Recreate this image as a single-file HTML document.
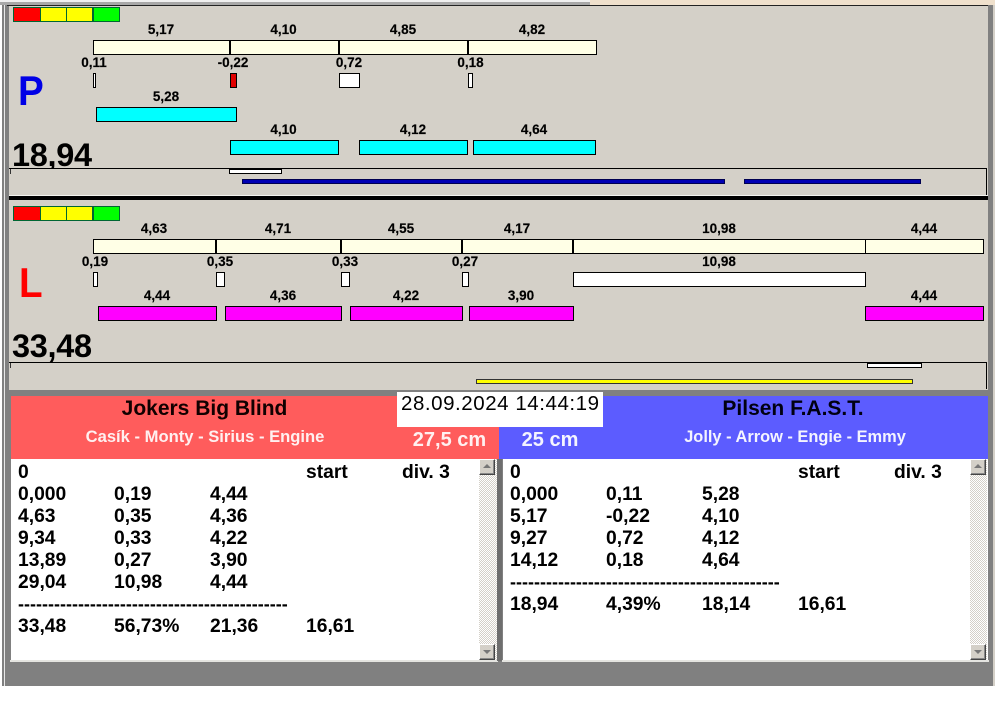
<!DOCTYPE html>
<html><head><meta charset="utf-8"><style>
html,body{margin:0;padding:0;background:#fff}
#r{position:relative;width:995px;height:716px;overflow:hidden;background:#fff;font-family:"Liberation Sans",Arial,sans-serif}
#r div{position:absolute;box-sizing:border-box}
.b{border:1px solid #000}
.c{background:#ffffe6}.w{background:#fff}.cy{background:#0ff}.m{background:#f0f}
.t{font-weight:bold;font-size:13.5px;line-height:14px;height:14px;color:#000;white-space:nowrap;transform:translateX(-50%);-webkit-text-stroke:.15px #000}
.h{font-weight:bold;white-space:nowrap;transform:translateX(-50%)}
.d{font-weight:bold;font-size:19.3px;line-height:22px;height:22px;margin-top:1px;color:#000;white-space:nowrap}
.ds{font-weight:bold;font-size:18px;line-height:22px;height:22px;color:#000;white-space:nowrap}
.big{font:bold 32.5px/38px "Liberation Sans",Arial,sans-serif;color:#000;letter-spacing:-.3px}
.ltr{font:bold 42px/50px "Liberation Sans",Arial,sans-serif;transform:scaleX(.92);transform-origin:0 0}
.track{background-color:#f2f2f2;background-image:repeating-conic-gradient(#d4d0c8 0 25%,#fff 0 50%);background-size:2px 2px}
.btn{background:#d4d0c8;border:1px solid;border-color:#fff #444 #444 #fff;box-shadow:inset -1px -1px 0 #888}
.up{width:0;height:0;border-left:4px solid transparent;border-right:4px solid transparent;border-bottom:4px solid #777}
.dn{width:0;height:0;border-left:4px solid transparent;border-right:4px solid transparent;border-top:4px solid #777}
</style></head><body><div id="r">
<!-- window frame -->
<div style="left:2px;top:0;width:993px;height:686px;background:#808080"></div>
<div style="left:4px;top:0;width:1px;height:686px;background:#e8e8e8"></div>
<div style="left:0;top:0;width:590px;height:2px;background:#f0f0f0"></div>
<div style="left:0;top:2px;width:590px;height:3px;background:#a8a8a8"></div>
<div style="left:590px;top:0;width:405px;height:5px;background:#efe0cc"></div>
<div style="left:993px;top:5px;width:2px;height:681px;background:#d4d0c8"></div>
<div style="left:7px;top:5px;width:981px;height:1px;background:#222"></div>

<!-- panel P -->
<div style="left:9px;top:6px;width:979px;height:190px;background:#d4d0c8"></div>
<div style="left:9px;top:195px;width:979px;height:1px;background:#f4f4f0"></div>
<div style="left:13px;top:7px;width:28px;height:15px;background:#f00;border:1px solid #063"></div>
<div style="left:40px;top:7px;width:27px;height:15px;background:#ff0;border:1px solid #063"></div>
<div style="left:66px;top:7px;width:27px;height:15px;background:#ff0;border:1px solid #063"></div>
<div style="left:93px;top:7px;width:27px;height:15px;background:#0f0;border:1px solid #063"></div>

<div class="b c" style="left:93px;top:40px;width:504px;height:15px"></div>
<div style="left:229px;top:40px;width:2px;height:15px;background:#000"></div>
<div style="left:338px;top:40px;width:2px;height:15px;background:#000"></div>
<div style="left:467px;top:40px;width:2px;height:15px;background:#000"></div>

<div class="b w" style="left:93px;top:73px;width:3px;height:15px"></div>
<div class="b" style="left:230px;top:73px;width:7px;height:15px;background:#e00000"></div>
<div class="b w" style="left:339px;top:73px;width:21px;height:15px"></div>
<div class="b w" style="left:468px;top:73px;width:5px;height:15px"></div>

<div class="b cy" style="left:96px;top:107px;width:141px;height:15px"></div>
<div class="b cy" style="left:230px;top:140px;width:109px;height:15px"></div>
<div class="b cy" style="left:359px;top:140px;width:109px;height:15px"></div>
<div class="b cy" style="left:473px;top:140px;width:123px;height:15px"></div>

<div class="t" style="left:161px;top:23px">5,17</div>
<div class="t" style="left:283.5px;top:23px">4,10</div>
<div class="t" style="left:403px;top:23px">4,85</div>
<div class="t" style="left:532px;top:23px">4,82</div>
<div class="t" style="left:94px;top:56px">0,11</div>
<div class="t" style="left:233px;top:56px">-0,22</div>
<div class="t" style="left:349px;top:56px">0,72</div>
<div class="t" style="left:470.5px;top:56px">0,18</div>
<div class="t" style="left:166px;top:90px">5,28</div>
<div class="t" style="left:283.5px;top:123px">4,10</div>
<div class="t" style="left:413px;top:123px">4,12</div>
<div class="t" style="left:534px;top:123px">4,64</div>

<div class="ltr" style="left:18px;top:66px;color:#0000e6">P</div>
<div class="big" style="left:12px;top:136px;width:90px;height:32px;overflow:hidden">18,94</div>

<div style="left:9px;top:168px;width:978px;height:1px;background:#000"></div>
<div style="left:10px;top:169px;width:1px;height:5px;background:#333"></div>
<div style="left:986px;top:168px;width:1px;height:27px;background:#000"></div>
<div class="b w" style="left:229px;top:169px;width:53px;height:5px"></div>
<div style="left:242px;top:179px;width:483px;height:5px;background:#0000b4;border:1px solid #000050"></div>
<div style="left:744px;top:179px;width:177px;height:5px;background:#0000b4;border:1px solid #000050"></div>

<div style="left:9px;top:196px;width:979px;height:4px;background:#000"></div>

<!-- panel L -->
<div style="left:9px;top:200px;width:979px;height:190px;background:#d4d0c8"></div>
<div style="left:13px;top:206px;width:28px;height:15px;background:#f00;border:1px solid #063"></div>
<div style="left:40px;top:206px;width:27px;height:15px;background:#ff0;border:1px solid #063"></div>
<div style="left:66px;top:206px;width:27px;height:15px;background:#ff0;border:1px solid #063"></div>
<div style="left:93px;top:206px;width:27px;height:15px;background:#0f0;border:1px solid #063"></div>

<div class="b c" style="left:93px;top:239px;width:891px;height:15px"></div>
<div style="left:215px;top:239px;width:2px;height:15px;background:#000"></div>
<div style="left:340px;top:239px;width:2px;height:15px;background:#000"></div>
<div style="left:461px;top:239px;width:2px;height:15px;background:#000"></div>
<div style="left:572px;top:239px;width:2px;height:15px;background:#000"></div>
<div style="left:865px;top:239px;width:1px;height:15px;background:#000"></div>

<div class="b w" style="left:93px;top:272px;width:5px;height:15px"></div>
<div class="b w" style="left:216px;top:272px;width:9px;height:15px"></div>
<div class="b w" style="left:341px;top:272px;width:9px;height:15px"></div>
<div class="b w" style="left:462px;top:272px;width:7px;height:15px"></div>
<div class="b w" style="left:573px;top:272px;width:293px;height:15px"></div>

<div class="b m" style="left:98px;top:306px;width:119px;height:15px"></div>
<div class="b m" style="left:225px;top:306px;width:117px;height:15px"></div>
<div class="b m" style="left:350px;top:306px;width:113px;height:15px"></div>
<div class="b m" style="left:469px;top:306px;width:105px;height:15px"></div>
<div class="b m" style="left:865px;top:306px;width:119px;height:15px"></div>

<div class="t" style="left:154px;top:222px">4,63</div>
<div class="t" style="left:278px;top:222px">4,71</div>
<div class="t" style="left:401px;top:222px">4,55</div>
<div class="t" style="left:517px;top:222px">4,17</div>
<div class="t" style="left:719px;top:222px">10,98</div>
<div class="t" style="left:924px;top:222px">4,44</div>
<div class="t" style="left:95px;top:255px">0,19</div>
<div class="t" style="left:220px;top:255px">0,35</div>
<div class="t" style="left:345px;top:255px">0,33</div>
<div class="t" style="left:465px;top:255px">0,27</div>
<div class="t" style="left:719px;top:255px">10,98</div>
<div class="t" style="left:157px;top:289px">4,44</div>
<div class="t" style="left:283px;top:289px">4,36</div>
<div class="t" style="left:406px;top:289px">4,22</div>
<div class="t" style="left:521px;top:289px">3,90</div>
<div class="t" style="left:924px;top:289px">4,44</div>

<div class="ltr" style="left:19px;top:258px;color:#f00">L</div>
<div class="big" style="left:12px;top:327px">33,48</div>

<div style="left:9px;top:362px;width:978px;height:1px;background:#000"></div>
<div style="left:10px;top:363px;width:1px;height:5px;background:#333"></div>
<div style="left:986px;top:362px;width:1px;height:27px;background:#000"></div>
<div class="b w" style="left:867px;top:363px;width:55px;height:5px"></div>
<div style="left:476px;top:379px;width:437px;height:5px;background:#ff0;border:1px solid #333"></div>

<!-- team headers -->
<div style="left:11px;top:396px;width:488px;height:63px;background:#ff5c5c"></div>
<div style="left:499px;top:396px;width:489px;height:63px;background:#5c5cff"></div>
<div style="left:397px;top:392px;width:206px;height:35px;background:#fff"></div>
<div style="left:401px;top:392px;font-size:20.5px;line-height:24px;color:#000;white-space:nowrap;letter-spacing:.55px">28.09.2024 14:44:19</div>

<div class="h" style="left:204.5px;top:397px;font-size:21px;line-height:24px;color:#100">Jokers Big Blind</div>
<div class="h" style="left:205px;top:428px;font-size:16.6px;line-height:18px;color:#fff0f0">Casík - Monty - Sirius - Engine</div>
<div class="h" style="left:449.5px;top:428px;font-size:20px;line-height:24px;color:#fff0f0">27,5 cm</div>
<div class="h" style="left:550px;top:428px;font-size:20px;line-height:24px;color:#f4f4ff">25 cm</div>
<div class="h" style="left:793px;top:397px;font-size:21px;line-height:24px;color:#001">Pilsen F.A.S.T.</div>
<div class="h" style="left:795px;top:428px;font-size:16.4px;line-height:18px;color:#f4f4ff">Jolly - Arrow - Engie - Emmy</div>

<!-- lists -->
<div style="left:11px;top:459px;width:486px;height:201px;background:#fff"></div>
<div style="left:503px;top:459px;width:485px;height:201px;background:#fff"></div>
<div style="left:10px;top:660px;width:488px;height:2px;background:#e4e4e0"></div>
<div style="left:502px;top:660px;width:487px;height:2px;background:#e4e4e0"></div>
<div style="left:497px;top:459px;width:5px;height:202px;background:#6e6e6e"></div>

<div class="track" style="left:479px;top:459px;width:18px;height:201px"></div>
<div class="btn" style="left:479px;top:459px;width:16px;height:16px"><div class="up" style="left:3px;top:4px"></div></div>
<div class="btn" style="left:479px;top:644px;width:16px;height:16px"><div class="dn" style="left:3px;top:5px"></div></div>
<div class="track" style="left:970px;top:459px;width:17px;height:201px"></div>
<div class="btn" style="left:970px;top:459px;width:16px;height:16px"><div class="up" style="left:3px;top:4px"></div></div>
<div class="btn" style="left:970px;top:644px;width:16px;height:16px"><div class="dn" style="left:3px;top:5px"></div></div>

<div class="d" style="left:18px;top:461px">0</div>
<div class="d" style="left:306px;top:461px">start</div>
<div class="d" style="left:402px;top:461px">div. 3</div>
<div class="d" style="left:18px;top:483px">0,000</div><div class="d" style="left:114px;top:483px">0,19</div><div class="d" style="left:210px;top:483px">4,44</div>
<div class="d" style="left:18px;top:505px">4,63</div><div class="d" style="left:114px;top:505px">0,35</div><div class="d" style="left:210px;top:505px">4,36</div>
<div class="d" style="left:18px;top:527px">9,34</div><div class="d" style="left:114px;top:527px">0,33</div><div class="d" style="left:210px;top:527px">4,22</div>
<div class="d" style="left:18px;top:549px">13,89</div><div class="d" style="left:114px;top:549px">0,27</div><div class="d" style="left:210px;top:549px">3,90</div>
<div class="d" style="left:18px;top:571px">29,04</div><div class="d" style="left:114px;top:571px">10,98</div><div class="d" style="left:210px;top:571px">4,44</div>
<div class="ds" style="left:18px;top:593px">---------------------------------------------</div>
<div class="d" style="left:18px;top:615px">33,48</div><div class="d" style="left:114px;top:615px">56,73%</div><div class="d" style="left:210px;top:615px">21,36</div><div class="d" style="left:306px;top:615px">16,61</div>

<div class="d" style="left:510px;top:461px">0</div>
<div class="d" style="left:798px;top:461px">start</div>
<div class="d" style="left:894px;top:461px">div. 3</div>
<div class="d" style="left:510px;top:483px">0,000</div><div class="d" style="left:606px;top:483px">0,11</div><div class="d" style="left:702px;top:483px">5,28</div>
<div class="d" style="left:510px;top:505px">5,17</div><div class="d" style="left:606px;top:505px">-0,22</div><div class="d" style="left:702px;top:505px">4,10</div>
<div class="d" style="left:510px;top:527px">9,27</div><div class="d" style="left:606px;top:527px">0,72</div><div class="d" style="left:702px;top:527px">4,12</div>
<div class="d" style="left:510px;top:549px">14,12</div><div class="d" style="left:606px;top:549px">0,18</div><div class="d" style="left:702px;top:549px">4,64</div>
<div class="ds" style="left:510px;top:571px">---------------------------------------------</div>
<div class="d" style="left:510px;top:593px">18,94</div><div class="d" style="left:606px;top:593px">4,39%</div><div class="d" style="left:702px;top:593px">18,14</div><div class="d" style="left:798px;top:593px">16,61</div>
</div></body></html>
